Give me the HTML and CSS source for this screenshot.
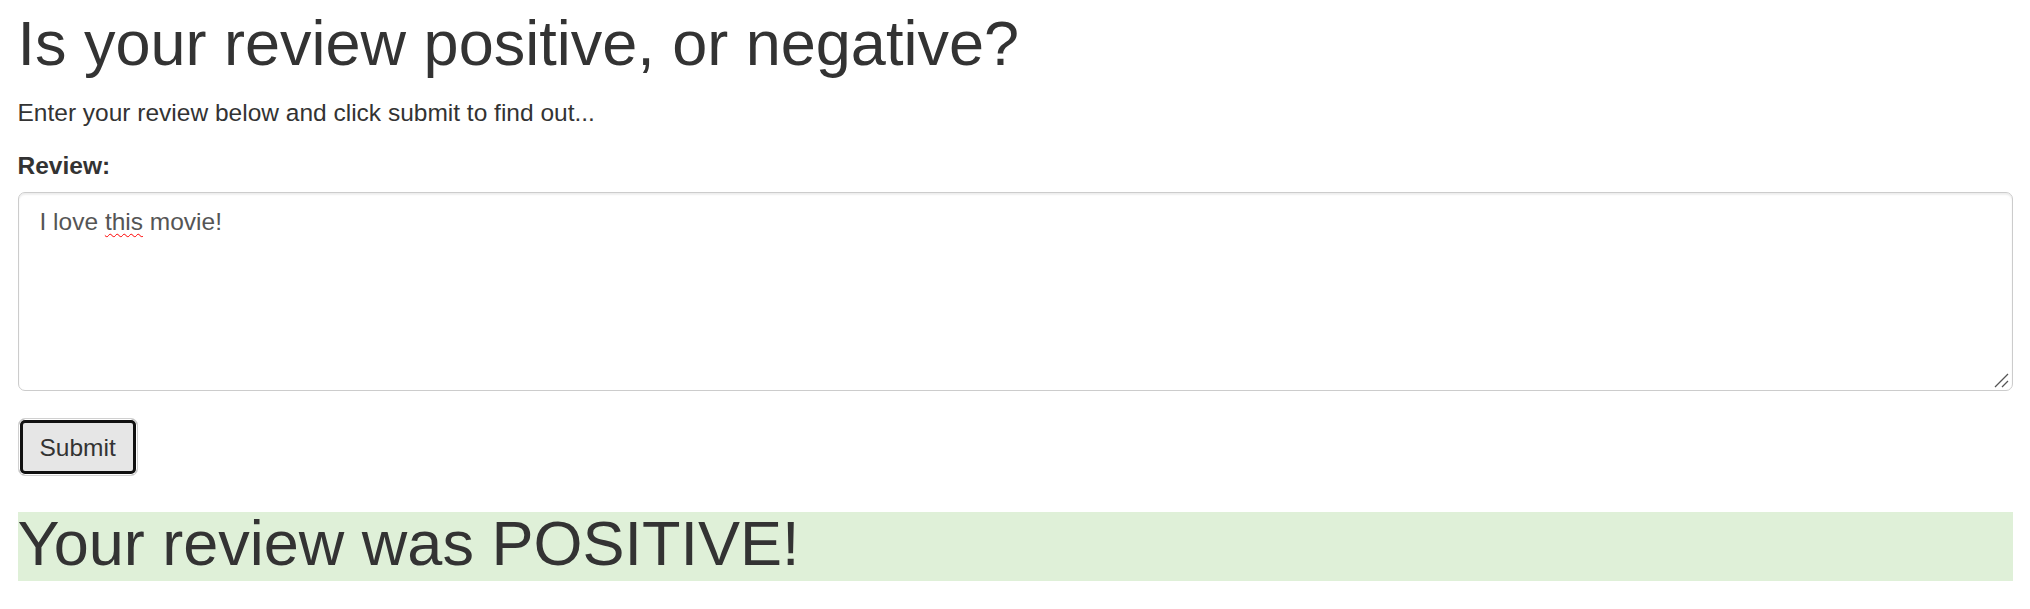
FILE: index.html
```html
<!DOCTYPE html>
<html lang="en">
<head>
<meta charset="utf-8">
<title>Review sentiment</title>
<link rel="stylesheet" href="styles.css">
</head>
<body>
<div class="page">
  <h1 class="title">Is your review positive, or negative?</h1>
  <p class="lead-text">Enter your review below and click submit to find out...</p>
  <form class="review-form">
    <div class="form-group">
      <label class="form-label">Review:</label>
      <div class="textbox" role="textbox">I love <span class="misspelled">this</span> movie!<svg class="grip" width="16" height="16" viewBox="0 0 16 16"><path d="M2 15 L15 2 M9 15 L15 9" stroke="#555" stroke-width="1.3" fill="none"/></svg></div>
    </div>
    <button type="button" class="btn">Submit</button>
  </form>
  <h1 class="result">Your review was POSITIVE!</h1>
</div>
</body>
</html>
```
FILE: styles.css
```css
html, body {
  margin: 0;
  padding: 0;
  background: #fff;
}
body {
  font-family: "Liberation Sans", Arial, Helvetica, sans-serif;
  font-size: 24.5px;
  line-height: 35px;
  color: #333;
}
.page {
  padding: 8.5px 17.5px 0;
}
.title {
  margin: 0 0 17.5px;
  font-size: 63px;
  line-height: 69.3px;
  font-weight: 400;
  color: #333;
}
.lead-text {
  margin: 0 0 17.5px;
}
.review-form {
  margin: 0;
}
.form-group {
  margin-bottom: 26.5px;
}
.form-label {
  display: block;
  font-weight: 700;
  margin-bottom: 8.75px;
}
.textbox {
  position: relative;
  box-sizing: border-box;
  height: 199.5px;
  padding: 11px 21px 10.5px;
  border: 1px solid #ccc;
  border-radius: 7px;
  box-shadow: inset 0 1.75px 1.75px rgba(0, 0, 0, 0.075);
  color: #555;
  background: #fff;
}
.misspelled {
  text-decoration: underline wavy #f00;
  text-decoration-thickness: 1.2px;
  text-underline-offset: 3px;
}
.grip {
  position: absolute;
  right: 3px;
  bottom: 2px;
}
.btn {
  display: block;
  box-sizing: border-box;
  height: 58.5px;
  padding: 11.5px 21px 10px;
  font-family: inherit;
  font-size: 24.5px;
  line-height: 35px;
  color: #333;
  background: #e6e6e6;
  border: 1px solid #d0d0d0;
  border-radius: 7px;
  box-shadow: inset 0 0 0 1px #fff, inset 0 0 0 4px #111;
  margin: 0;
}
.result {
  margin: 36px 0 0;
  padding: 0 0 6px;
  font-size: 63px;
  line-height: 63px;
  font-weight: 400;
  color: #333;
  background: #dff0d8;
}
```
